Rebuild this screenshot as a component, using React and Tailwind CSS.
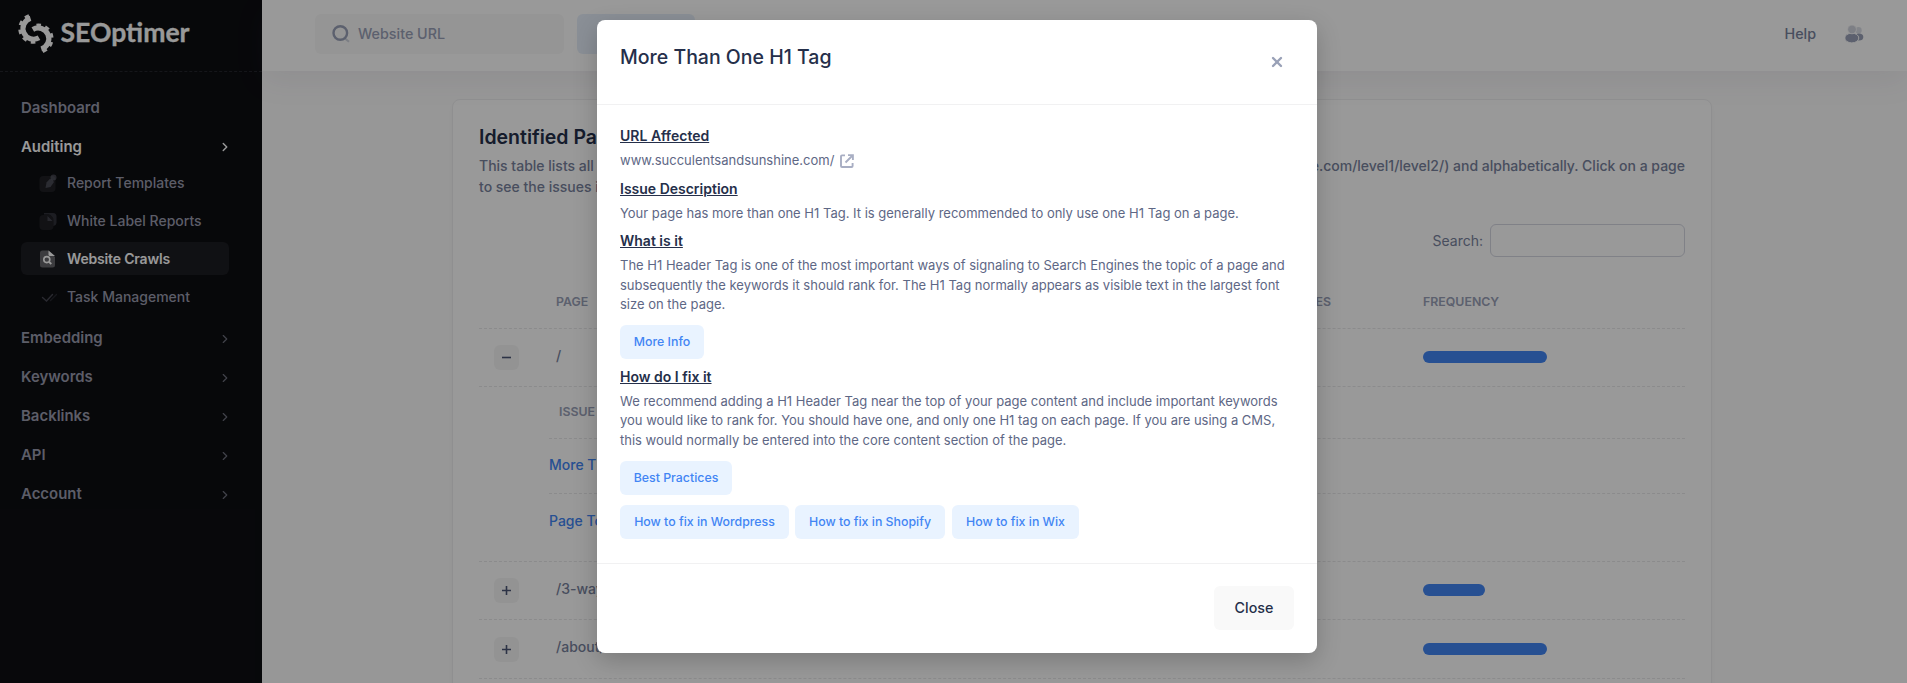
import { ChevronRight, X } from 'lucide-react';

const GearHalf = () => (
  <>
    <path d="M13 4.3 A10.7 10.7 0 1 0 21.5 23.8" strokeWidth="5.2" />
    <path d="M11.5 1.8 A13.5 13.5 0 1 0 22 26.6" strokeWidth="3.2" strokeDasharray="4.4 4.4" />
  </>
);

const Logo = () => (
  <svg width="176" height="44" viewBox="0 0 176 44" className="shrink-0">
    <g transform="translate(0.5 0)" fill="none" stroke="#fff">
      <GearHalf />
      <g transform="rotate(180 18.4 19.6)">
        <GearHalf />
      </g>
    </g>
    <text
      x="43.5"
      y="27.5"
      fill="#fff"
      stroke="#fff"
      strokeWidth="0.3"
      textLength="129"
      lengthAdjust="spacingAndGlyphs"
      className="font-['Lato',sans-serif] text-[27px] font-bold"
    >
      SEOptimer
    </text>
  </svg>
);

const TemplateIcon = () => (
  <svg width="18" height="18" viewBox="0 0 18 18" fill="#9a9cae">
    <rect x="0.5" y="2" width="16" height="16" rx="4" opacity="0.12" />
    <path d="M6.5 14 L7.5 8.5 L11 4.8 Q14 5.5 15 8 L11.5 13 Z" opacity="0.35" />
    <circle cx="14.5" cy="3.4" r="3" opacity="0.35" />
  </svg>
);

const ReportIcon = () => (
  <svg width="18" height="18" viewBox="0 0 18 18" fill="#9a9cae">
    <rect x="0.5" y="3" width="14" height="15" rx="4" opacity="0.12" />
    <path d="M5 1 H14 a3.5 3.5 0 0 1 3.5 3.5 V11 a3.5 3.5 0 0 1 -3 3 V8 a5 5 0 0 0 -5 -5.5 H5 Z" opacity="0.25" />
    <path d="M8.5 4 V9 H13.5 Z" opacity="0.3" />
  </svg>
);

const CrawlIcon = () => (
  <svg width="18" height="18" viewBox="0 0 18 18">
    <path
      d="M3.5 0.5 H9.5 L16 7 V15 a2.5 2.5 0 0 1 -2.5 2.5 H3.5 a2.5 2.5 0 0 1 -2.5 -2.5 V3 a2.5 2.5 0 0 1 2.5 -2.5Z"
      fill="#fff"
      opacity="0.32"
    />
    <path d="M9.5 0.5 L16 6 H11 a1.5 1.5 0 0 1 -1.5 -1.5Z" fill="#fff" />
    <circle cx="7.8" cy="9.6" r="3" fill="none" stroke="#fff" strokeWidth="1.6" />
    <path d="M10 11.8 L12.3 14" stroke="#fff" strokeWidth="1.8" />
  </svg>
);

const TaskIcon = () => (
  <svg width="18" height="18" viewBox="0 0 18 18" fill="none" stroke="#9a9cae" strokeWidth="1.4" strokeLinecap="round">
    <path d="M3.5 9.5 L7.5 13 L13.5 6.5" opacity="0.4" />
    <path d="M11.5 12.5 L17.5 6.5" opacity="0.18" />
  </svg>
);

const SearchIcon = () => (
  <svg width="18" height="18" viewBox="0 0 18 18" fill="none" stroke="#99a1b7">
    <circle cx="8.3" cy="8" r="6.8" strokeWidth="2.4" />
    <path d="M13 13.5 L17 16.8" strokeWidth="2" opacity="0.45" />
  </svg>
);

const UsersIcon = () => (
  <svg width="19" height="18" viewBox="0 0 19 18" fill="#99a1b7">
    <circle cx="13.5" cy="5.2" r="3.2" opacity="0.35" />
    <ellipse cx="14" cy="12" rx="4.3" ry="3.6" />
    <ellipse cx="6.8" cy="13" rx="7" ry="4.9" stroke="#fff" strokeWidth="1" />
    <circle cx="7" cy="4.4" r="4.4" fill="#d0d4de" stroke="#fff" strokeWidth="0.8" />
  </svg>
);

const ExternalIcon = () => (
  <svg width="14" height="14" viewBox="0 0 14 14" fill="none" stroke="#a8aec3" strokeWidth="1.9">
    <path d="M5 1.4 H2 a1 1 0 0 0 -1 1 V12 a1 1 0 0 0 1 1 H11.6 a1 1 0 0 0 1 -1 V9" />
    <path d="M8 1.1 H12.9 V6 M12.5 1.5 L5.5 8.5" />
  </svg>
);

const subItems = [
  { label: 'Report Templates', Icon: TemplateIcon },
  { label: 'White Label Reports', Icon: ReportIcon },
  { label: 'Website Crawls', Icon: CrawlIcon, active: true },
  { label: 'Task Management', Icon: TaskIcon },
];

const sections = ['Embedding', 'Keywords', 'Backlinks', 'API', 'Account'];

const Sidebar = () => (
  <aside className="flex h-full w-[262px] shrink-0 flex-col bg-[#0d0e12]">
    <div className="flex h-[72px] shrink-0 items-start border-b border-dashed border-[#23252c] pt-[14px] pl-[17px]">
      <Logo />
    </div>
    <nav className="flex flex-col px-[21px] pt-[17px] text-[14.95px] font-semibold text-[#9a9cae]">
      <a className="flex h-[39px] items-center">Dashboard</a>
      <a className="flex h-[38px] items-center justify-between text-white">
        Auditing
        <ChevronRight className="mr-[9px] h-[14px] w-[14px]" strokeWidth={2.5} />
      </a>
      <div className="mb-[6px] flex flex-col gap-[5px] text-[14px] font-medium">
        {subItems.map(({ label, Icon, active }) => (
          <a
            key={label}
            className={`flex h-[33px] w-[208px] items-center gap-[10px] rounded-md pl-[18px] ${
              active ? 'bg-[#1c1d22] font-semibold tracking-[-0.17px] text-white' : ''
            }`}
          >
            <Icon />
            {label}
          </a>
        ))}
      </div>
      {sections.map((label) => (
        <a key={label} className="flex h-[39px] items-center justify-between">
          {label}
          <ChevronRight className="mr-[9px] h-[14px] w-[14px] text-[#6d6f7c]" strokeWidth={2} />
        </a>
      ))}
    </nav>
  </aside>
);

const Header = () => (
  <header className="relative flex h-[71px] shrink-0 items-start bg-white pt-[14px] pr-[43px] pl-[53px] text-[14px] font-medium shadow-[0_10px_30px_0_rgba(82,63,105,0.08)]">
    <div className="flex h-10 w-[249px] items-center gap-[8px] rounded-md bg-[#f9f9f9] pb-[1px] pl-[17px] text-[14.3px] text-[#99a1b7]">
      <SearchIcon />
      Website URL
    </div>
    <div className="ml-[13px] h-10 w-[118px] rounded-md bg-[#e6effb]" />
    <div className="ml-auto flex h-10 items-center gap-[29px] text-[14.3px] text-[#78829d]">
      Help
      <UsersIcon />
    </div>
  </header>
);

const Toggle = ({ open }) => (
  <div className="ml-[15px] flex h-[25px] w-[25px] items-center justify-center rounded-md bg-[#f6f6f6]">
    <svg width="11" height="11" viewBox="0 0 11 11" stroke="#4b5675" strokeWidth="1.6">
      <path d={open ? 'M1 5.5 H10' : 'M1 5.5 H10 M5.5 1 V10'} />
    </svg>
  </div>
);

const PageRow = ({ page, open, width, className }) => (
  <div className={`flex items-center border-b border-dashed border-[#e8e8ea] ${className}`}>
    <div className="w-[77px]">
      <Toggle open={open} />
    </div>
    <div className="w-[867px] pb-[5px]">{page}</div>
    <div className="mb-[1px] h-[12px] rounded-full bg-[#4285f4]" style={{ width }} />
  </div>
);

const PagesCard = () => (
  <div className="mt-[28px] ml-[190px] flex h-[700px] w-[1260px] shrink-0 flex-col rounded-lg border border-[#efeff1] bg-white px-[26px] pt-[23px] text-[14px] font-medium text-[#78829d] shadow-[0_3px_4px_0_rgba(0,0,0,0.03)]">
    <h2 className="text-[19.5px] leading-[28px] font-semibold text-[#252f4a]">Identified Pages</h2>
    <div className="mt-[4px] leading-[21px] whitespace-nowrap">
      <div className="flex justify-between">
        <span>This table lists all pages found in the crawl.</span>
        <span>Pages are ordered by level (e.g. example.com/level1/level2/) and alphabetically. Click on a page</span>
      </div>
      <div>to see the issues identified.</div>
    </div>
    <div className="mt-[27px] flex items-center justify-end gap-[7px] font-normal">
      Search:
      <div className="h-[33px] w-[195px] rounded-md border border-[#d5d7e2]" />
    </div>
    <div className="mt-[16px] flex h-[56px] items-center border-b border-dashed border-[#e8e8ea] pt-[4px] text-[12.35px] font-semibold text-[#99a1b7]">
      <span className="ml-[77px] w-[731px]">PAGE</span>
      <span className="w-[136px]">ISSUES</span>
      <span>FREQUENCY</span>
    </div>
    <PageRow page="/" open width={124} className="h-[58px]" />
    <div className="flex h-[175px] flex-col border-b border-dashed border-[#e8e8ea]">
      <div className="ml-[70px] flex h-[52px] items-center border-b border-dashed border-[#e8e8ea] pl-[10px] text-[12.35px] font-semibold text-[#99a1b7]">
        ISSUE
      </div>
      <div className="ml-[70px] flex h-[55px] items-center border-b border-dashed border-[#e8e8ea] pb-[3px] text-[#4285f4]">
        More Than One H1 Tag
      </div>
      <div className="ml-[70px] flex h-[55px] items-center pb-[3px] text-[#4285f4]">Page Too Large</div>
    </div>
    <PageRow page="/3-ways-to-propagate/" width={62} className="h-[58px]" />
    <PageRow page="/about/" width={124} className="h-[59px]" />
  </div>
);

const Heading = ({ children }) => (
  <h4 className="mt-[7px] mb-[4.5px] text-[14px] leading-[21px] font-semibold text-[#252f4a] underline">{children}</h4>
);

const LinkButton = ({ children, className }) => (
  <button className={`h-[34px] rounded-md bg-[#e9f3ff] text-[12.35px] font-medium text-[#4285f4] ${className}`}>
    {children}
  </button>
);

const Modal = () => (
  <div className="flex h-[633px] w-[720px] flex-col rounded-lg bg-white text-[13px] leading-[19.8px] text-[#5e6785] shadow-[0_8px_24px_0_rgba(0,0,0,0.2)]">
    <div className="flex h-[85px] shrink-0 items-start justify-between border-b border-[#f1f1f2] px-[23px] pt-[23px]">
      <h3 className="text-[19.5px] leading-[29px] font-medium text-[#252f4a]">More Than One H1 Tag</h3>
      <X className="mt-[11px] mr-[9px] h-[16px] w-[16px] text-[#99a1b7]" strokeWidth={3.6} />
    </div>
    <div className="flex h-[459px] shrink-0 flex-col border-b border-[#f1f1f2] px-[23px] pt-[13px]">
      <Heading>URL Affected</Heading>
      <p className="flex h-[20.5px] items-center gap-[6px]">
        www.succulentsandsunshine.com/
        <ExternalIcon />
      </p>
      <Heading>Issue Description</Heading>
      <p>Your page has more than one H1 Tag. It is generally recommended to only use one H1 Tag on a page.</p>
      <Heading>What is it</Heading>
      <p>
        The H1 Header Tag is one of the most important ways of signaling to Search Engines the topic of a page and
        subsequently the keywords it should rank for. The H1 Tag normally appears as visible text in the largest font
        size on the page.
      </p>
      <div className="mt-[10px] flex">
        <LinkButton className="w-[84px]">More Info</LinkButton>
      </div>
      <Heading>How do I fix it</Heading>
      <p>
        We recommend adding a H1 Header Tag near the top of your page content and include important keywords you would
        like to rank for. You should have one, and only one H1 tag on each page. If you are using a CMS, this would
        normally be entered into the core content section of the page.
      </p>
      <div className="mt-[10px] flex">
        <LinkButton className="w-[112px]">Best Practices</LinkButton>
      </div>
      <div className="mt-[10px] flex">
        <LinkButton className="mr-[6px] w-[169px]">How to fix in Wordpress</LinkButton>
        <LinkButton className="mr-[7px] w-[150px]">How to fix in Shopify</LinkButton>
        <LinkButton className="w-[127px]">How to fix in Wix</LinkButton>
      </div>
    </div>
    <div className="flex justify-end px-[23px] pt-[22px]">
      <button className="h-[44px] w-[80px] rounded-md bg-[#f9f9f9] text-[14.3px] font-medium text-[#252f4a]">Close</button>
    </div>
  </div>
);

export default function App() {
  return (
    <div className="relative flex h-[683px] w-full overflow-hidden bg-[#fcfcfc] font-['Inter',sans-serif]">
      <Sidebar />
      <main className="flex min-w-0 flex-1 flex-col">
        <Header />
        <PagesCard />
      </main>

      {/* Backdrop + dialog */}
      <div className="absolute inset-0 flex items-start justify-center bg-black/40 pt-[20px] pl-[7px]">
        <Modal />
      </div>
    </div>
  );
}
